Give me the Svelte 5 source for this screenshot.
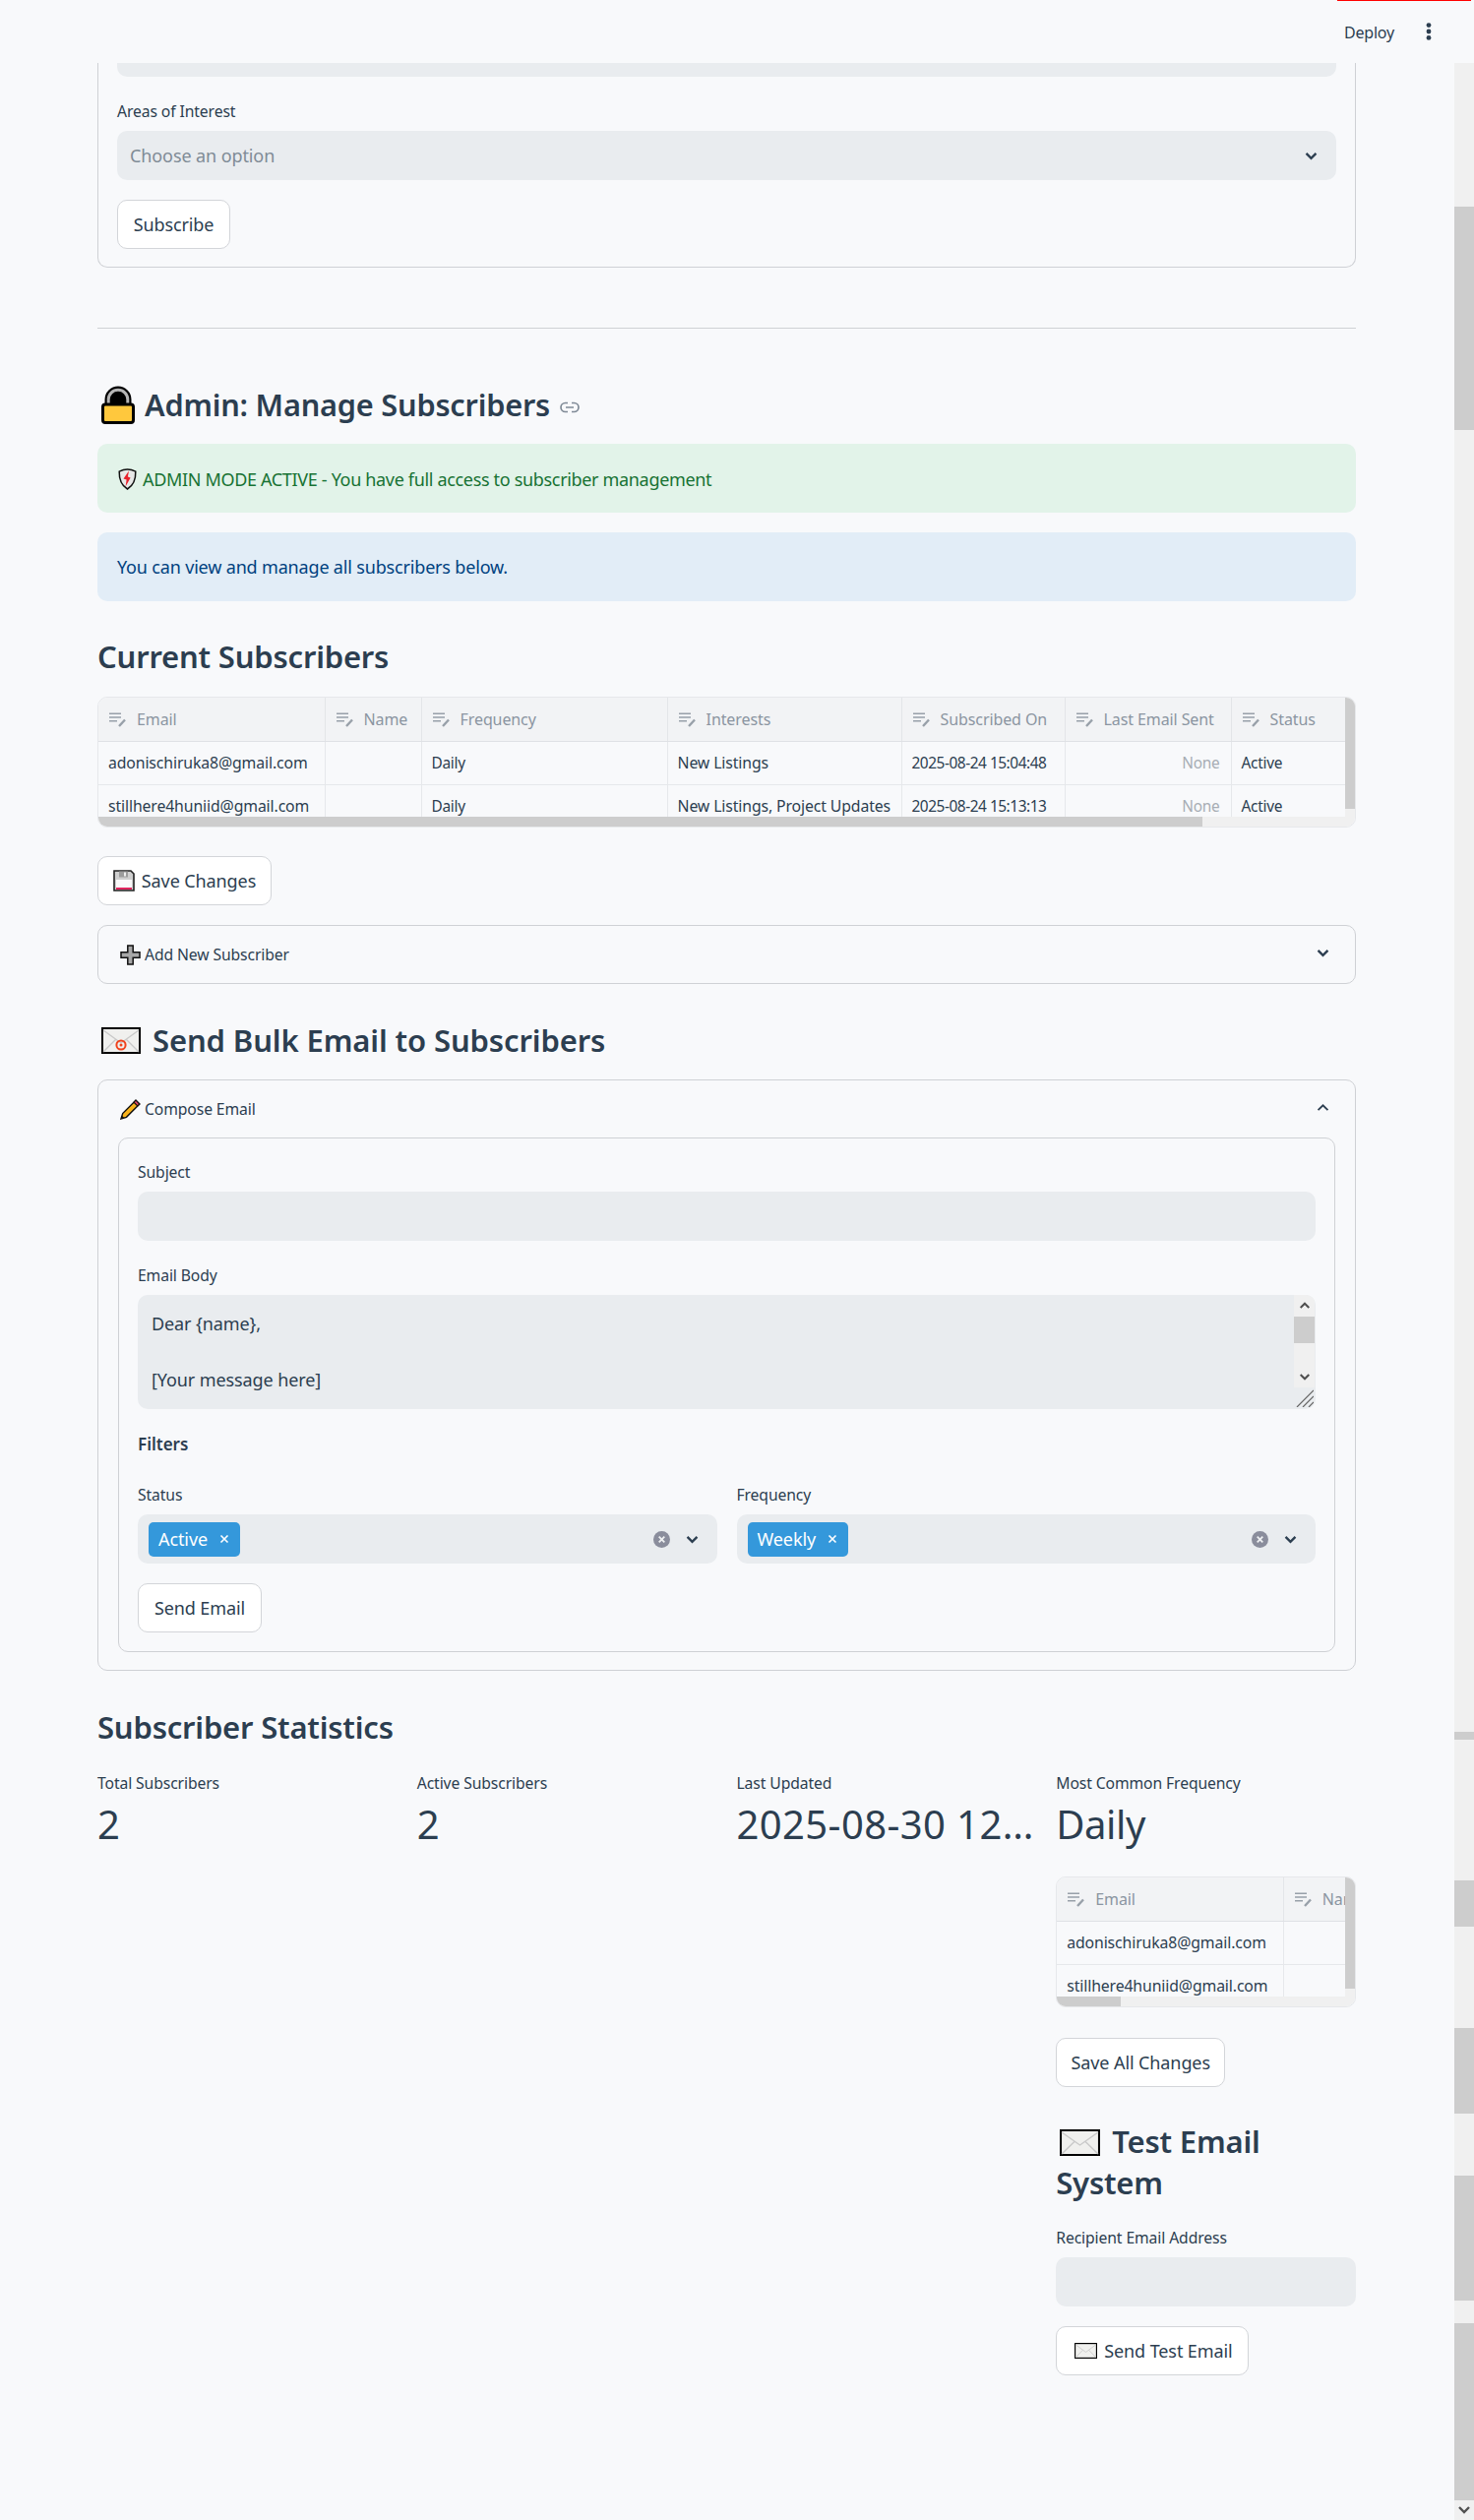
<script>
  const wideCols = [
    { name: 'Email', w: 230, cls: 'big' }, { name: 'Name', w: 98, cls: '' }, { name: 'Frequency', w: 250, cls: '' },
    { name: 'Interests', w: 238, cls: 'big' }, { name: 'Subscribed On', w: 166, cls: 'date' },
    { name: 'Last Email Sent', w: 169, cls: '' }, { name: 'Status', w: 160, cls: '' }
  ];
  const rows = [
    ['adonischiruka8@gmail.com', '', 'Daily', 'New Listings', '2025-08-24 15:04:48', 'None', 'Active'],
    ['stillhere4huniid@gmail.com', '', 'Daily', 'New Listings, Project Updates', '2025-08-24 15:13:13', 'None', 'Active']
  ];
  const narrowCols = wideCols.slice(0, 2);
  const track = [
    { h: 146, on: false }, { h: 227, on: true }, { h: 1323, on: false }, { h: 8, on: true },
    { h: 143, on: false }, { h: 47, on: true }, { h: 103, on: false }, { h: 87, on: true },
    { h: 63, on: false }, { h: 127, on: true }, { h: 23, on: false }, { h: 180, on: true }
  ];
</script>

{#snippet chevron(cls)}
  <svg class={cls} viewBox="0 0 14 10" aria-hidden="true"><path d="M1.5 2 7 7.5 12.5 2" fill="none" stroke="currentColor" stroke-width="2.6"/></svg>
{/snippet}

{#snippet clearIcon()}
  <svg class="clear" viewBox="0 0 17 17" aria-hidden="true"><circle cx="8.5" cy="8.5" r="8.5" fill="#8a8d9c"/><path d="M5.7 5.7l5.6 5.6M11.3 5.7l-5.6 5.6" stroke="#eef0f2" stroke-width="1.8"/></svg>
{/snippet}

{#snippet envelope(cls, at)}
  <svg class={cls} viewBox="0 0 40 27" preserveAspectRatio="none" aria-hidden="true">
    <rect x="1" y="1" width="38" height="25" fill="#f0f0ee" stroke="#000" stroke-width="2"/>
    <path d="M2 3 20 16 38 3M2 25 15 12M38 25 25 12" fill="none" stroke="#c9c9c9" stroke-width="1.4"/>
    {#if at}
      <circle cx="20" cy="18" r="4.6" fill="none" stroke="#f0421c" stroke-width="2"/>
      <circle cx="20" cy="18" r="1.5" fill="#f0421c"/>
    {/if}
  </svg>
{/snippet}

{#snippet select(tag)}
  <div class="field select multi">
    <span class="tag">{tag}<svg viewBox="0 0 10 10" aria-hidden="true"><path d="M1.5 1.5l7 7M8.5 1.5l-7 7" stroke="#fff" stroke-width="1.6"/></svg></span>
    <span class="grow"></span>
    {@render clearIcon()}
    {@render chevron('chev-sm')}
  </div>
{/snippet}

{#snippet grid(cols, thumb)}
  <div class="grid">
    <div class="clip">
      <table>
        <colgroup>{#each cols as c}<col style="width: {c.w}px" />{/each}</colgroup>
        <thead>
          <tr>
            {#each cols as c}
              <th>
                <svg viewBox="0 0 18 15" aria-hidden="true"><path d="M0 1.2h12M0 5h12M0 8.8h8" stroke="currentColor" stroke-width="1.5"/><path d="M10 14l6-6.5" stroke="currentColor" stroke-width="2.4"/></svg>
                <span>{c.name}</span>
              </th>
            {/each}
          </tr>
        </thead>
        <tbody>
          {#each rows as r}
            <tr>
              {#each cols as c, i}
                <td class={c.cls} class:none={r[i] === 'None'}>{r[i]}</td>
              {/each}
            </tr>
          {/each}
        </tbody>
      </table>
    </div>
    <div class="vbar"><i></i></div>
    <div class="hbar"><i style="width: {thumb}px"></i></div>
  </div>
{/snippet}

<div class="page">
  <header class="topbar">
    <span class="deploy">Deploy</span>
    <svg class="kebab" viewBox="0 0 6 18" aria-hidden="true"><circle cx="3" cy="2.6" r="2.4"/><circle cx="3" cy="9" r="2.4"/><circle cx="3" cy="15.4" r="2.4"/></svg>
    <span class="status-line"></span>
  </header>

  <div class="body">
    <main class="content">
      <section class="card subscribe">
        <div class="field stub"></div>
        <div class="label first">Areas of Interest</div>
        <div class="field select">
          <span class="placeholder">Choose an option</span>
          {@render chevron('chev-sm')}
        </div>
        <button class="btn b-subscribe">Subscribe</button>
      </section>

      <hr />

      <h2 class="h-admin">
        <svg class="i-lock" viewBox="0 0 34 39" aria-hidden="true">
          <path d="M3.5 20V14a13.5 13.5 0 0 1 27 0v6z" fill="#000"/>
          <path d="M7.2 19V14a9.8 9.8 0 0 1 19.6 0v5" fill="none" stroke="#b5b5b5" stroke-width="3"/>
          <rect x="1.5" y="19" width="31" height="18.5" rx="2.5" fill="#ffc83d" stroke="#000" stroke-width="3"/>
        </svg>
        <span class="t-admin">Admin: Manage Subscribers</span>
        <svg class="i-link" viewBox="0 0 20 12" aria-hidden="true"><path d="M8 1.5H5.5a4.5 4.5 0 0 0 0 9H8M12 1.5h2.5a4.5 4.5 0 0 1 0 9H12M6 6h8" fill="none" stroke="#7f8a96" stroke-width="1.7"/></svg>
      </h2>

      <div class="alert green">
        <svg class="i-shield" viewBox="0 0 19 22" aria-hidden="true">
          <path d="M9.5 1C6.5 1 3.5 2 1.2 3.2 1 10 3 17 9.5 21 16 17 18 10 17.8 3.2 15.5 2 12.5 1 9.5 1Z" fill="#e8e8e8" stroke="#111" stroke-width="1.5"/>
          <path d="M11 2.5 5.5 10.5 8.6 11.5 7.6 18.5 12.6 9.5 9.9 8.5Z" fill="#e8202c"/>
        </svg>
        <span class="t-green">ADMIN MODE ACTIVE - You have full access to subscriber management</span>
      </div>
      <div class="alert blue"><span class="t-blue">You can view and manage all subscribers below.</span></div>

      <h2 class="h-current">Current Subscribers</h2>
      {@render grid(wideCols, 1122)}

      <button class="btn b-save">
        <svg class="i-floppy" viewBox="0 0 22 22" aria-hidden="true">
          <path d="M1 1h17l3 3v17H1z" fill="#cfcfcf" stroke="#222" stroke-width="1.6"/>
          <rect x="6" y="1.5" width="9" height="6" fill="#9c9c9c"/>
          <rect x="11" y="2.5" width="2" height="4" fill="#eee"/>
          <rect x="3" y="10" width="16" height="10" fill="#fafafa"/>
          <rect x="3" y="18" width="16" height="2" fill="#e0235c"/>
        </svg>
        <span>Save Changes</span>
      </button>

      <div class="expander closed">
        <svg class="i-plus" viewBox="0 0 21 21" aria-hidden="true"><path d="M7.8 1h5.4v6.8H20v5.4h-6.8V20H7.8v-6.8H1V7.8h6.8z" fill="#a8a8a8" stroke="#111" stroke-width="1.5"/></svg>
        <span class="exp-title">Add New Subscriber</span>
        <span class="grow"></span>
        {@render chevron('chev-exp')}
      </div>

      <h2 class="h-bulk">
        {@render envelope('i-env-at', true)}
        <span>Send Bulk Email to Subscribers</span>
      </h2>

      <section class="card compose">
        <div class="exp-head">
          <svg class="i-pencil" viewBox="0 0 21 21" aria-hidden="true">
            <path d="M16 1.2 19.8 5 6.5 18.3 1 20l1.7-5.5z" fill="#f7b21b" stroke="#111" stroke-width="1.4"/>
            <path d="M16 1.2 19.8 5l-2 2L14 3.2z" fill="#e8476a" stroke="#111" stroke-width="1.2"/>
            <path d="M1 20l1-3.2L4.2 19z" fill="#111"/>
          </svg>
          <span class="exp-title">Compose Email</span>
          <span class="grow"></span>
          <svg class="chev-exp" viewBox="0 0 14 10" aria-hidden="true"><path d="M1.5 8 7 2.5 12.5 8" fill="none" stroke="currentColor" stroke-width="2"/></svg>
        </div>
        <div class="form">
          <div class="label first">Subject</div>
          <div class="field"></div>
          <div class="label next">Email Body</div>
          <div class="textarea">
            <div class="ta-text"><p>Dear &#123;name&#125;,</p><p>[Your message here]</p></div>
            <div class="ta-scroll">
              <svg viewBox="0 0 14 10" aria-hidden="true"><path d="M2 8 7 3l5 5" fill="none" stroke="#505050" stroke-width="2.4"/></svg>
              <i></i>
              <span class="grow"></span>
              <svg viewBox="0 0 14 10" aria-hidden="true"><path d="M2 2l5 5 5-5" fill="none" stroke="#505050" stroke-width="2.4"/></svg>
            </div>
            <svg class="resizer" viewBox="0 0 18 18" aria-hidden="true"><path d="M1 18 18 1M7 18 18 7M13 18l5-5" stroke="#666" stroke-width="1.2"/></svg>
          </div>
          <div class="filters">Filters</div>
          <div class="two">
            <div><div class="label">Status</div>{@render select('Active')}</div>
            <div><div class="label">Frequency</div>{@render select('Weekly')}</div>
          </div>
          <button class="btn b-send">Send Email</button>
        </div>
      </section>

      <h2 class="h-stats">Subscriber Statistics</h2>

      <div class="metrics">
        <div class="metric"><div class="label">Total Subscribers</div><div class="value">2</div></div>
        <div class="metric"><div class="label">Active Subscribers</div><div class="value">2</div></div>
        <div class="metric"><div class="label">Last Updated</div><div class="value stamp">2025-08-30 12:00:00</div></div>
        <div class="metric">
          <div class="label">Most Common Frequency</div>
          <div class="value">Daily</div>
          {@render grid(narrowCols, 65)}
          <button class="btn b-all">Save All Changes</button>
          <h2 class="h-test">{@render envelope('i-env', false)}<span>Test Email System</span></h2>
          <div class="label next">Recipient Email Address</div>
          <div class="field"></div>
          <button class="btn b-test">
            {@render envelope('i-env-sm', false)}
            <span>Send Test Email</span>
          </button>
        </div>
      </div>
    </main>

    <aside class="scrollbar" aria-hidden="true">
      {#each track as t}
        <div class:thumb={t.on} style="height: {t.h}px"></div>
      {/each}
      <div class="sb-arrow"><svg viewBox="0 0 14 10"><path d="M2 2l5 5 5-5" fill="none" stroke="#505050" stroke-width="2.4"/></svg></div>
    </aside>
  </div>
</div>

<style>
  :global(body) { margin: 0; background: #f8f9fb; overflow: hidden; }
  .page {
    height: 2561px; display: flex; flex-direction: column; overflow: hidden;
    background: #f8f9fb; color: #2c3e50;
    font-family: "Noto Sans", "Open Sans", sans-serif; font-size: 18px;
  }
  .topbar { height: 64px; flex: none; display: flex; align-items: center; position: relative; }
  .deploy { margin-left: 1366px; margin-top: 2px; font-size: 16px; letter-spacing: -0.2px; line-height: 20px; }
  .kebab { width: 6px; height: 18px; margin-left: 32px; fill: #2c3e50; }
  .status-line { position: absolute; top: 0; left: 1359px; width: 136px; height: 1px; background: #ff0000; }
  .body { flex: 1; display: flex; min-height: 0; }
  .content { width: 1279px; padding: 0 100px 0 99px; flex: none; }
  .scrollbar { width: 20px; flex: none; background: #f0f0f0; display: flex; flex-direction: column; }
  .thumb { background: #cdcdcd; }
  .sb-arrow { height: 20px; display: flex; align-items: center; justify-content: center; }
  .sb-arrow svg { width: 14px; height: 10px; }
  .grow { flex: 1; }

  .card { border: 1px solid #cfd1d5; border-radius: 10px; box-sizing: border-box; }
  .subscribe { border-top: 0; border-radius: 0 0 10px 10px; padding: 0 19px 18px; }
  .field { height: 50px; background: #e9ecef; border-radius: 10px; }
  .stub { height: 14px; border-radius: 0 0 10px 10px; }
  .label { height: 20px; line-height: 20px; font-size: 15.7px; letter-spacing: -0.1px; margin-bottom: 10px; white-space: nowrap; }
  .label.first { margin-top: 25px; }
  .label.next { margin-top: 25px; }
  .select { display: flex; align-items: center; padding: 0 19px 0 13px; box-sizing: border-box; }
  .placeholder { color: #7f8b96; font-size: 18px; letter-spacing: -0.1px; flex: 1; }
  .chev-sm { width: 13px; height: 9px; color: #2c3e50; }
  .btn {
    display: flex; align-items: center; background: #fff; border: 1px solid #d3d5d9; border-radius: 10px;
    height: 50px; box-sizing: border-box; padding: 0; font: inherit; color: inherit; font-size: 18px;
    letter-spacing: -0.1px; justify-content: center; white-space: nowrap;
  }
  .b-subscribe { width: 115px; margin-top: 20px; }
  hr { border: 0; height: 1px; background: #cfd1d5; margin: 61px 0 0; }

  h2 { margin: 0; font-weight: 600; display: flex; align-items: center; font-size: 31px; letter-spacing: -0.2px; color: #2c3e50; white-space: nowrap; }
  .h-admin { height: 50px; margin-top: 52px; font-size: 30.7px; }
  .i-lock { width: 34px; height: 39px; margin-left: 4px; margin-right: 10px; flex: none; }
  .i-link { width: 20px; height: 12px; margin-left: 10px; margin-top: 5px; }

  .alert { height: 70px; border-radius: 10px; display: flex; align-items: center; box-sizing: border-box; padding-left: 20px; font-size: 18px; letter-spacing: -0.17px; }
  .green { background: #e2f3e9; color: #177233; margin-top: 15px; padding-top: 2px; letter-spacing: -0.33px; }
  .blue { background: #e2edf7; color: #004280; margin-top: 20px; }
  .i-shield { width: 19px; height: 22px; margin-right: 6px; margin-left: 1px; flex: none; }

  .h-current { height: 40px; margin-top: 36px; margin-bottom: 21px; }

  .grid { position: relative; height: 133px; border: 1px solid #e6e8eb; border-radius: 10px; overflow: hidden; box-sizing: border-box; }
  .clip { position: absolute; left: 0; top: 0; right: 10px; bottom: 10px; overflow: hidden; }
  table { border-collapse: collapse; table-layout: fixed; width: max-content; }
  th {
    height: 44px; padding: 0 0 0 11px; text-align: left; font-weight: 400; box-sizing: border-box; background: #f2f3f5;
    color: #8b95a1; font-size: 16px; letter-spacing: -0.1px; border-right: 1px solid #e3e5e8; border-bottom: 1px solid #dfe1e5; white-space: nowrap; overflow: hidden;
  }
  th svg { width: 18px; height: 15px; margin-right: 6px; vertical-align: -2px; color: #98a0a9; }
  td {
    height: 44px; padding: 0 0 0 10px; box-sizing: border-box; font-size: 15.4px; letter-spacing: -0.25px;
    border-right: 1px solid #e6e8eb; border-bottom: 1px solid #e6e8eb; white-space: nowrap; overflow: hidden; color: #2c3e50;
  }
  td.big { font-size: 15.8px; letter-spacing: -0.12px; }
  td.date { font-size: 15.4px; letter-spacing: -0.45px; }
  td.none { color: #a7adb4; text-align: right; padding-right: 11px; }
  .vbar { position: absolute; right: 0; top: 0; bottom: 10px; width: 10px; background: #f0f0f0; }
  .vbar i { display: block; height: 113px; background: #cdcdcd; }
  .hbar { position: absolute; left: 0; right: 0; bottom: 0; height: 10px; background: #f0f0f0; }
  .hbar i { display: block; height: 10px; background: #cdcdcd; }

  .b-save { width: 177px; margin-top: 29px; }
  .i-floppy { width: 22px; height: 22px; margin-right: 7px; }
  .expander { height: 60px; margin-top: 20px; border: 1px solid #cfd1d5; border-radius: 10px; display: flex; align-items: center; padding: 0 26px 0 22px; box-sizing: border-box; }
  .i-plus, .i-pencil { width: 21px; height: 21px; margin-right: 4px; flex: none; }
  .exp-title { font-size: 15.7px; letter-spacing: -0.1px; }
  .chev-exp { width: 13px; height: 9px; color: #2c3e50; margin-top: -4px; }
  .h-bulk { height: 50px; margin-top: 32px; letter-spacing: -0.12px; }
  .i-env-at { width: 40px; height: 27px; margin-left: 4px; margin-right: 12px; flex: none; }
  .compose { margin-top: 15px; padding: 0 20px 18px; }
  .exp-head { height: 58px; display: flex; align-items: center; padding: 0 6px 0 2px; }
  .form { border: 1px solid #cfd1d5; border-radius: 10px; padding: 0 19px 19px; }
  .form .label.first { margin-top: 24px; }
  .textarea { height: 116px; background: #e9ecef; border-radius: 10px; position: relative; overflow: hidden; }
  .ta-text { padding: 15px 14px 0; font-size: 18px; line-height: 28px; letter-spacing: -0.1px; }
  .ta-text p { margin: 0; }
  .ta-text p + p { margin-top: 29px; }
  .ta-scroll { position: absolute; right: 1px; top: 0; width: 21px; height: 94px; background: #f0f0f0; display: flex; flex-direction: column; align-items: center; }
  .ta-scroll svg { width: 12px; height: 9px; margin: 6px 0; flex: none; }
  .ta-scroll i { display: block; width: 21px; height: 27px; background: #cdcdcd; margin-top: 1px; }
  .resizer { position: absolute; right: 2px; bottom: 2px; width: 18px; height: 18px; }
  .filters { height: 24px; line-height: 24px; margin-top: 24px; font-weight: 600; font-size: 17px; }
  .two { display: grid; grid-template-columns: 1fr 1fr; gap: 20px; margin-top: 29px; }
  .multi { padding: 0 19px 0 11px; }
  .tag { background: #3498db; color: #fff; height: 35px; border-radius: 5px; display: flex; align-items: center; padding: 0 11px 0 10px; font-size: 18px; letter-spacing: -0.1px; }
  .tag svg { width: 10px; height: 10px; margin-left: 12px; }
  .clear { width: 17px; height: 17px; margin-right: 16px; }
  .b-send { width: 126px; margin-top: 20px; }

  .h-stats { height: 40px; margin-top: 37px; }
  .metrics { display: grid; grid-template-columns: repeat(4, 1fr); gap: 20px; margin-top: 27px; }
  .metric { min-width: 0; }
  .metric .label { margin-bottom: 5px; }
  .value { height: 54px; line-height: 54px; font-size: 40px; letter-spacing: -0.4px; white-space: nowrap; overflow: hidden; text-overflow: ellipsis; margin-bottom: 26px; }
  .value.stamp { letter-spacing: 0.4px; }
  .b-all { width: 172px; margin-top: 31px; }
  .h-test { display: block; height: 84px; line-height: 42px; margin-top: 34px; white-space: normal; }
  .i-env { width: 41px; height: 27px; vertical-align: -3px; margin-left: 4px; margin-right: 12px; }
  .metric .label.next { margin-bottom: 10px; }
  .b-test { width: 196px; margin-top: 20px; justify-content: flex-start; padding-left: 18px; }
  .i-env-sm { width: 23px; height: 16px; margin-right: 7px; }
</style>
